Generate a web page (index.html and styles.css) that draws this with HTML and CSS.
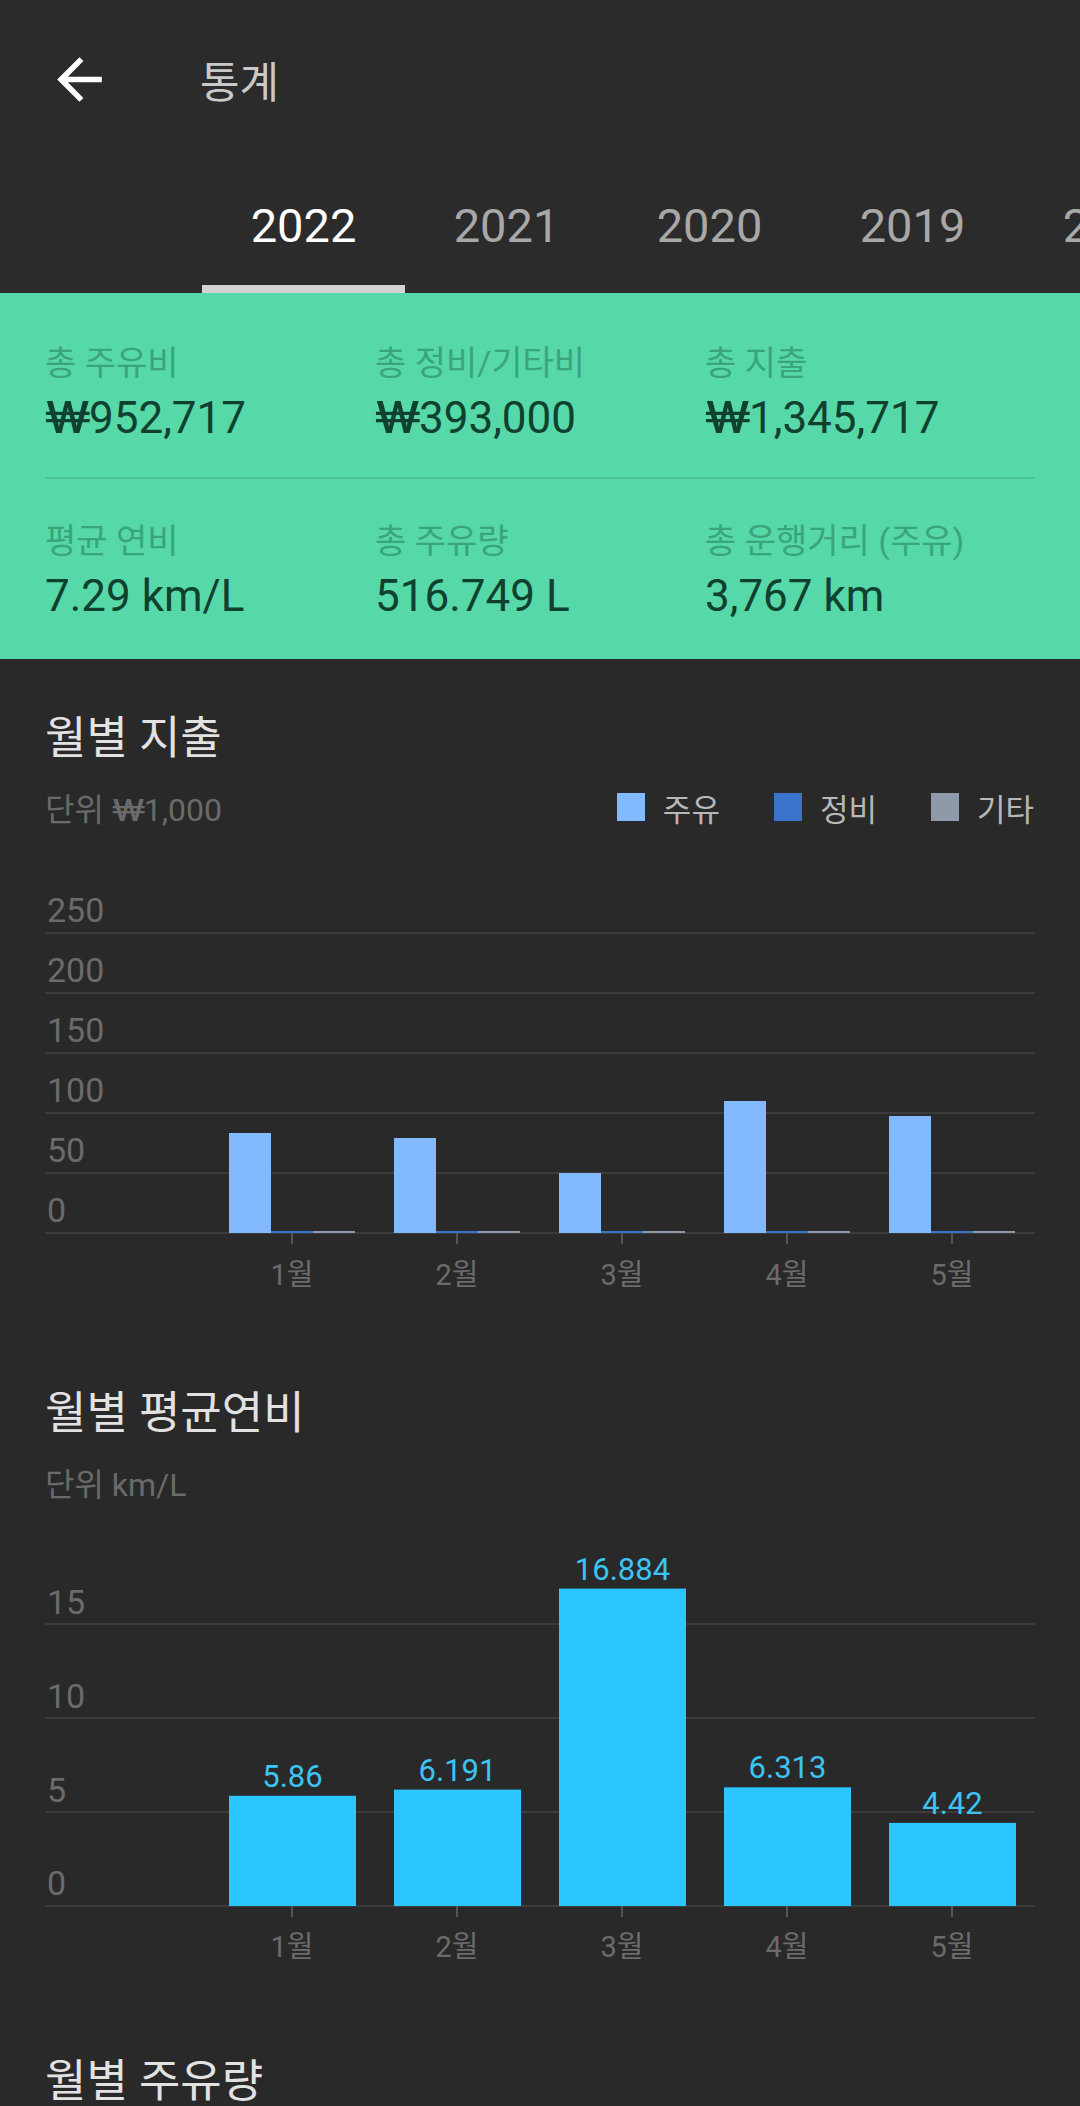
FILE: index.html
```html
<!DOCTYPE html>
<html lang="ko">
  <head>
    <meta charset="UTF-8" />
    <meta name="viewport" content="width=device-width, initial-scale=1.0" />
    <title>통계</title>
    <link rel="stylesheet" href="styles.css">
  </head>
  <body>
    <header class="toolbar">
      <svg class="back-icon" viewBox="0 0 24 24">
        <path d="M20 11H7.83l5.59-5.59L12 4l-8 8 8 8 1.41-1.41L7.83 13H20v-2z" />
      </svg>
      <h1 class="toolbar-title">통계</h1>
    </header>

    <nav class="tabs">
      <a class="tab active">2022</a>
      <a class="tab">2021</a>
      <a class="tab">2020</a>
      <a class="tab">2019</a>
      <a class="tab">2018</a>
    </nav>

    <section class="summary">
      <div class="summary-row">
        <div class="stat">
          <div class="stat-label">총 주유비</div>
          <div class="stat-value"><span class="won">₩</span>952,717</div>
        </div>
        <div class="stat">
          <div class="stat-label">총 정비/기타비</div>
          <div class="stat-value"><span class="won">₩</span>393,000</div>
        </div>
        <div class="stat">
          <div class="stat-label">총 지출</div>
          <div class="stat-value"><span class="won">₩</span>1,345,717</div>
        </div>
      </div>
      <div class="summary-divider"></div>
      <div class="summary-row">
        <div class="stat">
          <div class="stat-label">평균 연비</div>
          <div class="stat-value">7.29 km/L</div>
        </div>
        <div class="stat">
          <div class="stat-label">총 주유량</div>
          <div class="stat-value">516.749 L</div>
        </div>
        <div class="stat">
          <div class="stat-label">총 운행거리 (주유)</div>
          <div class="stat-value">3,767 km</div>
        </div>
      </div>
    </section>

    <section class="chart-section">
      <h2 class="chart-title">월별 지출</h2>
      <div class="chart-meta">
        <span class="chart-unit">단위 <span class="won">₩</span>1,000</span>
        <div class="legend">
          <span class="legend-item"><i class="swatch swatch-fuel"></i>주유</span>
          <span class="legend-item"><i class="swatch swatch-repair"></i>정비</span>
          <span class="legend-item"><i class="swatch swatch-etc"></i>기타</span>
        </div>
      </div>
      <svg class="chart chart-expense" viewBox="0 0 990 507">
        <line class="grid" x1="0" y1="106" x2="990" y2="106" />
        <line class="grid" x1="0" y1="166" x2="990" y2="166" />
        <line class="grid" x1="0" y1="226" x2="990" y2="226" />
        <line class="grid" x1="0" y1="286" x2="990" y2="286" />
        <line class="grid" x1="0" y1="346" x2="990" y2="346" />
        <line class="grid" x1="0" y1="406" x2="990" y2="406" />
        <text class="y-label" x="2" y="95">250</text>
        <text class="y-label" x="2" y="155">200</text>
        <text class="y-label" x="2" y="215">150</text>
        <text class="y-label" x="2" y="275">100</text>
        <text class="y-label" x="2" y="335">50</text>
        <text class="y-label" x="2" y="395">0</text>

        <rect class="bar-fuel" x="184" y="306" width="42" height="100" />
        <rect class="bar-repair" x="226" y="404" width="42" height="2" />
        <rect class="bar-etc" x="268" y="404" width="42" height="2" />
        <rect class="bar-fuel" x="349" y="311" width="42" height="95" />
        <rect class="bar-repair" x="391" y="404" width="42" height="2" />
        <rect class="bar-etc" x="433" y="404" width="42" height="2" />
        <rect class="bar-fuel" x="514" y="346" width="42" height="60" />
        <rect class="bar-repair" x="556" y="404" width="42" height="2" />
        <rect class="bar-etc" x="598" y="404" width="42" height="2" />
        <rect class="bar-fuel" x="679" y="274" width="42" height="132" />
        <rect class="bar-repair" x="721" y="404" width="42" height="2" />
        <rect class="bar-etc" x="763" y="404" width="42" height="2" />
        <rect class="bar-fuel" x="844" y="289" width="42" height="117" />
        <rect class="bar-repair" x="886" y="404" width="42" height="2" />
        <rect class="bar-etc" x="928" y="404" width="42" height="2" />

        <line class="tick" x1="247" y1="406" x2="247" y2="417" />
        <line class="tick" x1="412" y1="406" x2="412" y2="417" />
        <line class="tick" x1="577" y1="406" x2="577" y2="417" />
        <line class="tick" x1="742" y1="406" x2="742" y2="417" />
        <line class="tick" x1="907" y1="406" x2="907" y2="417" />
        <text class="x-label" x="247" y="458">1월</text>
        <text class="x-label" x="412" y="458">2월</text>
        <text class="x-label" x="577" y="458">3월</text>
        <text class="x-label" x="742" y="458">4월</text>
        <text class="x-label" x="907" y="458">5월</text>
      </svg>
    </section>

    <section class="chart-section">
      <h2 class="chart-title">월별 평균연비</h2>
      <div class="chart-meta">
        <span class="chart-unit">단위 km/L</span>
      </div>
      <svg class="chart chart-mileage" viewBox="0 0 990 500">
        <line class="grid" x1="0" y1="122" x2="990" y2="122" />
        <line class="grid" x1="0" y1="216" x2="990" y2="216" />
        <line class="grid" x1="0" y1="310" x2="990" y2="310" />
        <line class="grid" x1="0" y1="404" x2="990" y2="404" />
        <text class="y-label" x="2" y="112">15</text>
        <text class="y-label" x="2" y="206">10</text>
        <text class="y-label" x="2" y="300">5</text>
        <text class="y-label" x="2" y="393">0</text>

        <rect class="bar-mileage" x="184" y="293.8" width="127" height="110.2" />
        <rect class="bar-mileage" x="349" y="287.6" width="127" height="116.4" />
        <rect class="bar-mileage" x="514" y="86.6" width="127" height="317.4" />
        <rect class="bar-mileage" x="679" y="285.3" width="127" height="118.7" />
        <rect class="bar-mileage" x="844" y="320.9" width="127" height="83.1" />
        <text class="value-label" x="247.5" y="284.8">5.86</text>
        <text class="value-label" x="412.5" y="278.6">6.191</text>
        <text class="value-label" x="577.5" y="77.6">16.884</text>
        <text class="value-label" x="742.5" y="276.3">6.313</text>
        <text class="value-label" x="907.5" y="311.9">4.42</text>

        <line class="tick" x1="247" y1="404" x2="247" y2="415" />
        <line class="tick" x1="412" y1="404" x2="412" y2="415" />
        <line class="tick" x1="577" y1="404" x2="577" y2="415" />
        <line class="tick" x1="742" y1="404" x2="742" y2="415" />
        <line class="tick" x1="907" y1="404" x2="907" y2="415" />
        <text class="x-label" x="247" y="455">1월</text>
        <text class="x-label" x="412" y="455">2월</text>
        <text class="x-label" x="577" y="455">3월</text>
        <text class="x-label" x="742" y="455">4월</text>
        <text class="x-label" x="907" y="455">5월</text>
      </svg>
    </section>

    <section class="chart-section">
      <h2 class="chart-title">월별 주유량</h2>
    </section>
  </body>
</html>
```

FILE: styles.css
```css
body {
  background-color: #292929;
  color: #e0e0e0;
  font-family: Roboto, "Noto Sans CJK KR", sans-serif;
  margin: 0;
  padding: 0;
  overflow: hidden;
}
/* the won sign is drawn wider in the app font */
.won {
  display: inline-block;
  transform: scaleX(1.4);
  transform-origin: left center;
  margin-right: 0.26em;
}
.toolbar {
  display: flex;
  align-items: center;
  height: 158px;
  padding-left: 46px;
  background-color: #2b2b2b;
}
.back-icon {
  width: 67px;
  height: 67px;
  fill: #ffffff;
}
.toolbar-title {
  margin: 8px 0 0 87px;
  font-size: 43px;
  font-weight: normal;
  line-height: 56px;
  color: #c9c9c9;
}
.tabs {
  display: flex;
  height: 135px;
  padding-left: 202px;
  background-color: #2b2b2b;
  overflow: hidden;
  white-space: nowrap;
}
.tab {
  flex-shrink: 0;
  display: flex;
  align-items: center;
  justify-content: center;
  width: 203px;
  box-sizing: border-box;
  padding-top: 8px;
  border-bottom: 8px solid transparent;
  font-size: 47px;
  color: #a8a8a8;
  cursor: pointer;
}
.tab.active {
  color: #ffffff;
  border-bottom-color: #d2d2d2;
}
.summary {
  background-color: #56d8a8;
  padding: 50px 45px 37px;
}
.summary-row {
  display: grid;
  grid-template-columns: repeat(3, 1fr);
}
.stat-label {
  font-size: 34px;
  line-height: 40px;
  height: 40px;
  color: #3aa57d;
  white-space: nowrap;
}
.stat-value {
  margin-top: 9px;
  font-size: 44px;
  line-height: 52px;
  height: 52px;
  color: #10402e;
  white-space: nowrap;
}
.summary-divider {
  height: 2px;
  margin: 33px 0 42px;
  background-color: #4ac396;
}
.chart-section {
  padding: 52px 45px 0;
}
.chart-title {
  margin: 0;
  font-size: 45px;
  font-weight: normal;
  line-height: 56px;
  height: 56px;
  color: #e2e2e2;
}
.chart-meta {
  display: flex;
  justify-content: space-between;
  align-items: center;
  height: 40px;
  margin-top: 20px;
}
.chart-unit {
  font-size: 32px;
  color: #6a6a6a;
}
.legend {
  display: flex;
  gap: 54px;
  margin-right: 1px;
}
.legend-item {
  display: flex;
  align-items: center;
  font-size: 31px;
  color: #b8b8b8;
}
.swatch {
  width: 28px;
  height: 28px;
  margin-right: 18px;
}
.swatch-fuel {
  background-color: #82b9ff;
}
.swatch-repair {
  background-color: #3a73c9;
}
.swatch-etc {
  background-color: #8e9aaa;
}
.chart {
  display: block;
  width: 990px;
}
.chart-expense {
  height: 507px;
}
.chart-mileage {
  height: 500px;
}
.grid {
  stroke: #3b3b3b;
  stroke-width: 2;
}
.tick {
  stroke: #555555;
  stroke-width: 2;
}
.y-label {
  font-size: 34px;
  fill: #6b6b6b;
}
.x-label {
  font-size: 29px;
  fill: #6b6b6b;
  text-anchor: middle;
}
.value-label {
  font-size: 31px;
  fill: #3cc4f3;
  text-anchor: middle;
}
.bar-fuel {
  fill: #82b9ff;
}
.bar-repair {
  fill: #3a73c9;
}
.bar-etc {
  fill: #8e9aaa;
}
.bar-mileage {
  fill: #2bc5ff;
}
```
